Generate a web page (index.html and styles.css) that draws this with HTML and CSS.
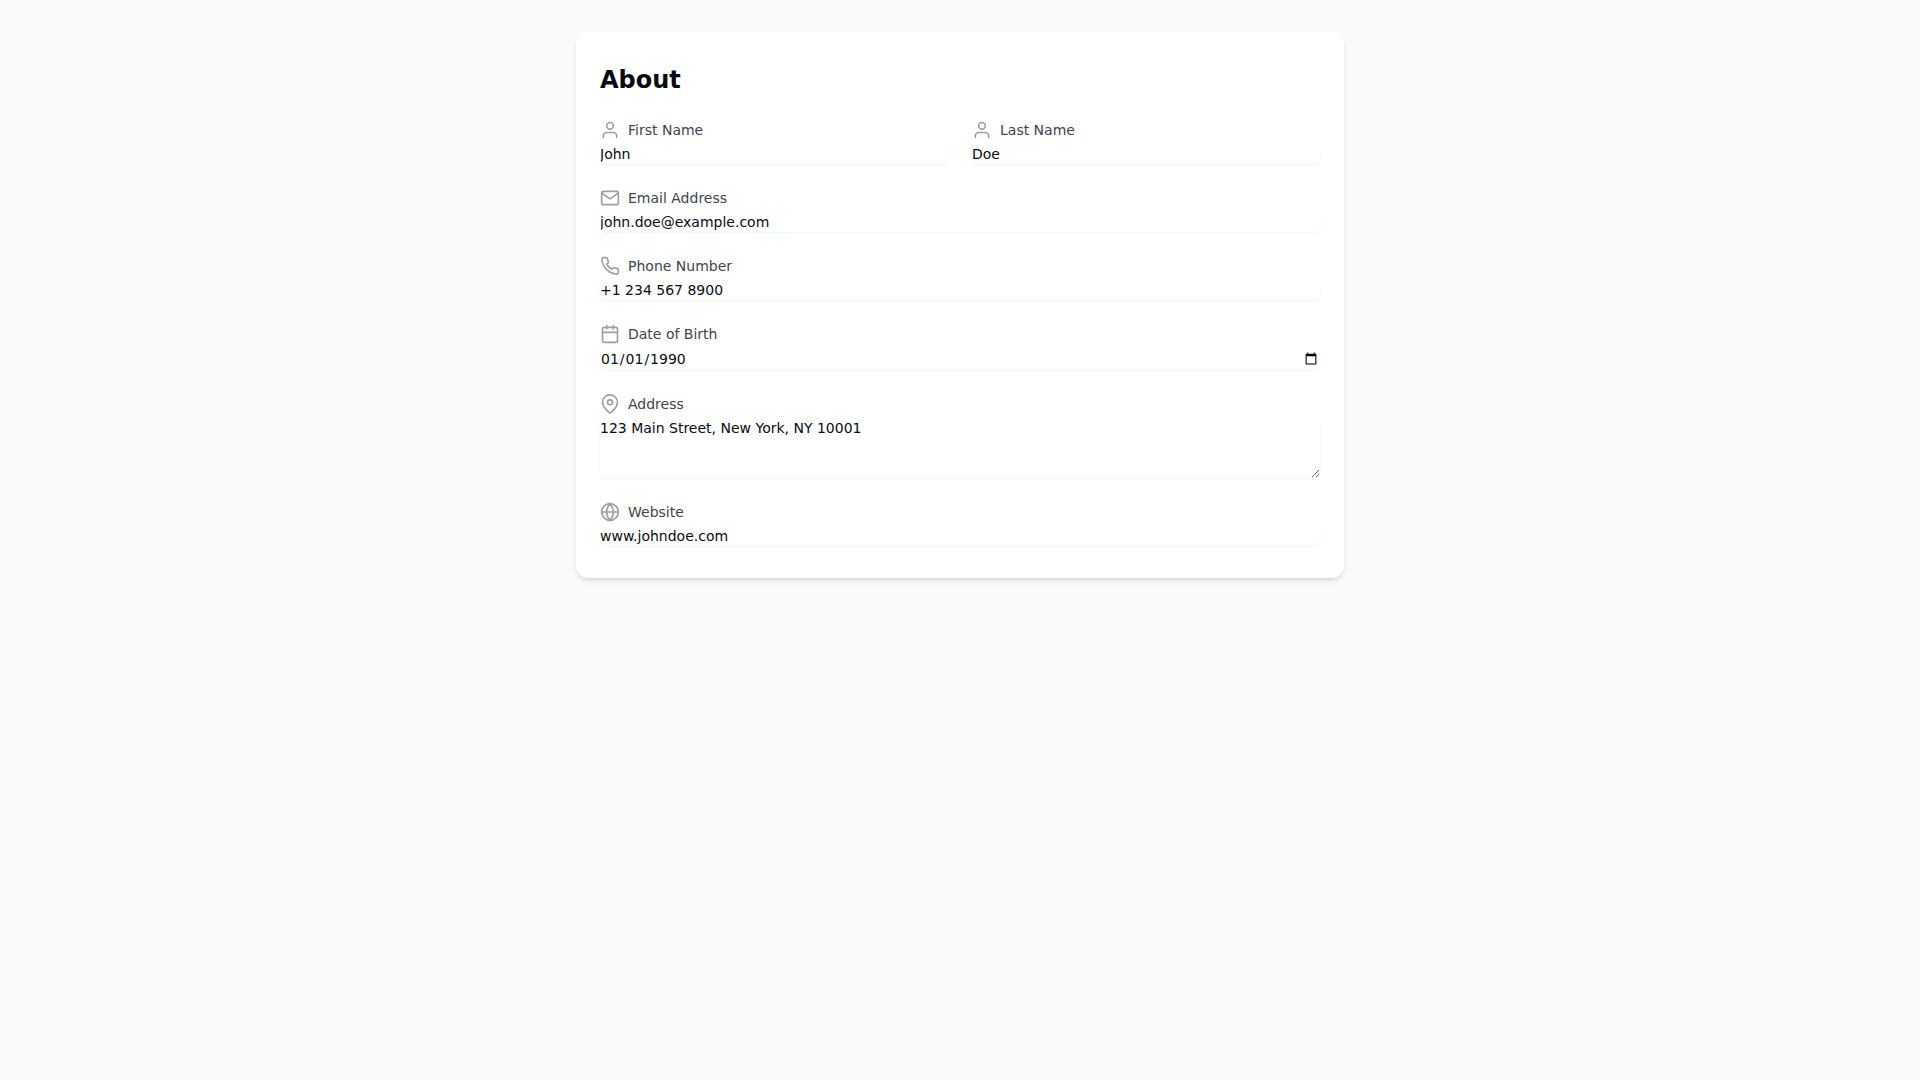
FILE: index.html
```html
<!DOCTYPE html>
<html lang="en">
<head>
    <meta charset="UTF-8">
    <meta name="viewport" content="width=device-width, initial-scale=1.0">
    <title>About</title>
    <link rel="stylesheet" href="styles.css">
</head>
<body>
    <main class="card">
        <h1>About</h1>
        <form class="form">
            <div class="row">
                <div class="field">
                    <label for="first-name">
                        <svg class="icon" viewBox="0 0 24 24"><path d="M20 21v-2a4 4 0 0 0-4-4H8a4 4 0 0 0-4 4v2"/><circle cx="12" cy="7" r="4"/></svg>
                        First Name
                    </label>
                    <input type="text" id="first-name" value="John">
                </div>
                <div class="field">
                    <label for="last-name">
                        <svg class="icon" viewBox="0 0 24 24"><path d="M20 21v-2a4 4 0 0 0-4-4H8a4 4 0 0 0-4 4v2"/><circle cx="12" cy="7" r="4"/></svg>
                        Last Name
                    </label>
                    <input type="text" id="last-name" value="Doe">
                </div>
            </div>

            <div class="field">
                <label for="email">
                    <svg class="icon" viewBox="0 0 24 24"><path d="M4 4h16c1.1 0 2 .9 2 2v12c0 1.1-.9 2-2 2H4c-1.1 0-2-.9-2-2V6c0-1.1.9-2 2-2z"/><polyline points="22,6 12,13 2,6"/></svg>
                    Email Address
                </label>
                <input type="email" id="email" value="john.doe@example.com">
            </div>

            <div class="field">
                <label for="phone">
                    <svg class="icon" viewBox="0 0 24 24"><path d="M22 16.92v3a2 2 0 0 1-2.18 2 19.79 19.79 0 0 1-8.63-3.07 19.5 19.5 0 0 1-6-6 19.79 19.79 0 0 1-3.07-8.67A2 2 0 0 1 4.11 2h3a2 2 0 0 1 2 1.72 12.84 12.84 0 0 0 .7 2.81 2 2 0 0 1-.45 2.11L8.09 9.91a16 16 0 0 0 6 6l1.27-1.27a2 2 0 0 1 2.11-.45 12.84 12.84 0 0 0 2.81.7A2 2 0 0 1 22 16.92z"/></svg>
                    Phone Number
                </label>
                <input type="tel" id="phone" value="+1 234 567 8900">
            </div>

            <div class="field">
                <label for="birth">
                    <svg class="icon" viewBox="0 0 24 24"><rect x="3" y="4" width="18" height="18" rx="2" ry="2"/><path d="M16 2v4M8 2v4M3 10h18"/></svg>
                    Date of Birth
                </label>
                <input type="date" id="birth" value="1990-01-01">
            </div>

            <div class="field">
                <label for="address">
                    <svg class="icon" viewBox="0 0 24 24"><path d="M21 10c0 7-9 13-9 13s-9-6-9-13a9 9 0 0 1 18 0z"/><circle cx="12" cy="10" r="3"/></svg>
                    Address
                </label>
                <textarea id="address" rows="3">123 Main Street, New York, NY 10001</textarea>
            </div>

            <div class="field">
                <label for="website">
                    <svg class="icon" viewBox="0 0 24 24"><circle cx="12" cy="12" r="10"/><path d="M2 12h20"/><path d="M12 2a15.3 15.3 0 0 1 4 10 15.3 15.3 0 0 1-4 10 15.3 15.3 0 0 1-4-10 15.3 15.3 0 0 1 4-10z"/></svg>
                    Website
                </label>
                <input type="url" id="website" value="www.johndoe.com">
            </div>
        </form>
    </main>
</body>
</html>
```
FILE: styles.css
```css
* {
    box-sizing: border-box;
}

body {
    margin: 0;
    min-height: 100vh;
    padding: 32px 16px;
    background: #f9fafc;
    color: #090b12;
    font-family: "DejaVu Sans", sans-serif;
    font-size: 14px;
    line-height: 20px;
}

.card {
    max-width: 768px;
    margin: 0 auto;
    padding: 32px 24px;
    background: #fff;
    border-radius: 12px;
    box-shadow: 0 4px 6px -1px rgba(0, 0, 0, 0.1), 0 2px 4px -2px rgba(0, 0, 0, 0.1);
}

h1 {
    margin: 0 0 24px;
    font-size: 24px;
    line-height: 32px;
    font-weight: 700;
}

.form {
    display: flex;
    flex-direction: column;
    gap: 24px;
}

.row {
    display: grid;
    grid-template-columns: 1fr 1fr;
    gap: 24px;
}

.field {
    display: flex;
    flex-direction: column;
    gap: 4px;
}

label {
    display: flex;
    align-items: center;
    gap: 8px;
    color: #3f444e;
}

.icon {
    width: 20px;
    height: 20px;
    fill: none;
    stroke: #9ca0a7;
    stroke-width: 2;
    stroke-linecap: round;
    stroke-linejoin: round;
}

input,
textarea {
    display: block;
    width: 100%;
    margin: 0;
    padding: 0;
    border: none;
    border-radius: 6px;
    background: #fff;
    color: inherit;
    font: inherit;
    box-shadow: 0 1px 2px 0 rgba(0, 0, 0, 0.05);
}

textarea {
    resize: vertical;
}

@media (max-width: 640px) {
    .row {
        grid-template-columns: 1fr;
    }
}
```
